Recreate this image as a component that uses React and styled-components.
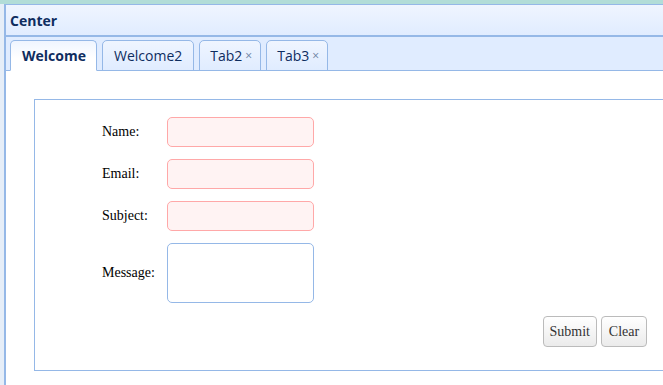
import styled, { createGlobalStyle } from 'styled-components';

const GlobalStyle = createGlobalStyle`
  html, body {
    margin: 0;
    padding: 0;
    overflow: hidden;
    background: #e6eef8;
  }
  body {
    font-family: "Liberation Serif", serif;
  }
`;

const tabs = [
  { label: 'Welcome', selected: true },
  { label: 'Welcome2' },
  { label: 'Tab2', closable: true },
  { label: 'Tab3', closable: true },
];

const fields = [
  { label: 'Name:', required: true },
  { label: 'Email:', required: true },
  { label: 'Subject:', required: true },
  { label: 'Message:', multiline: true },
];

const App = () => (
  <>
    <GlobalStyle />
    <TopStrip />
    <Panel>
      <PanelHeader>Center</PanelHeader>
      <TabBar>
        {tabs.map((tab) => (
          <Tab key={tab.label} $selected={tab.selected} $closable={tab.closable}>
            {tab.label}
            {tab.closable && <Close>×</Close>}
          </Tab>
        ))}
      </TabBar>
      <Content>
        <FormBox>
          <FormGrid>
            {fields.map((field) => (
              <Row key={field.label}>
                <Label>{field.label}</Label>
                {field.multiline ? <TextArea /> : <Input $required={field.required} />}
              </Row>
            ))}
          </FormGrid>
          <Actions>
            <Button>Submit</Button>
            <Button>Clear</Button>
          </Actions>
        </FormBox>
      </Content>
    </Panel>
  </>
);

const TopStrip = styled.div`
  height: 4px;
  background: #b2ddd8;
`;

const Panel = styled.div`
  margin-left: 4px;
  width: 720px;
  border-top: 1px solid #95b8e7;
  border-left: 2px solid #95b8e7;
`;

const PanelHeader = styled.div`
  height: 32px;
  box-sizing: border-box;
  padding: 0 0 0 4px;
  display: flex;
  align-items: center;
  background: linear-gradient(to bottom, #eff5ff 0%, #e0ecff 100%);
  border-bottom: 2px solid #95b8e7;
  font-family: "Open Sans", "DejaVu Sans", sans-serif;
  font-weight: bold;
  font-size: 14px;
  color: #0e2d5f;
`;

const TabBar = styled.div`
  height: 34px;
  box-sizing: border-box;
  padding: 3px 0 0 4px;
  display: flex;
  align-items: flex-end;
  gap: 5px;
  background: #e0ecff;
  border-bottom: 1px solid #95b8e7;
`;

const Tab = styled.div`
  height: 31px;
  box-sizing: border-box;
  margin-bottom: -1px;
  padding: 0 ${(p) => (p.$closable ? '8px' : p.$selected ? '10px' : '11px')} 0
    ${(p) => (p.$closable ? '10px' : '11px')};
  display: flex;
  align-items: center;
  gap: 3px;
  border: 1px solid #95b8e7;
  border-bottom: ${(p) => (p.$selected ? '1px solid #fff' : '1px solid #95b8e7')};
  border-radius: 5px 5px 0 0;
  background: ${(p) =>
    p.$selected
      ? 'linear-gradient(to bottom, #eff5ff 0%, #ffffff 60%)'
      : 'linear-gradient(to bottom, #eff5ff 0%, #e0ecff 100%)'};
  font-family: "Open Sans", "DejaVu Sans", sans-serif;
  font-size: 14px;
  font-weight: ${(p) => (p.$selected ? 'bold' : 'normal')};
  color: #0e2d5f;
`;

const Close = styled.span`
  font-size: 12px;
  color: #6c7f9f;
  margin-top: -1px;
`;

const Content = styled.div`
  background: #fff;
  padding: 28px 0 0 28px;
  height: 320px;
`;

const FormBox = styled.div`
  width: 660px;
  box-sizing: border-box;
  height: 272px;
  border: 1px solid #95b8e7;
  padding: 17px 46px 0 67px;
  display: flex;
  flex-direction: column;
`;

const FormGrid = styled.div`
  display: flex;
  flex-direction: column;
  gap: 12px;
`;

const Row = styled.div`
  display: flex;
  align-items: center;
`;

const Label = styled.label`
  width: 65px;
  font-size: 14px;
  color: #000;
`;

const Input = styled.div`
  width: 147px;
  height: 30px;
  box-sizing: border-box;
  border: 1px solid ${(p) => (p.$required ? '#ffa8a8' : '#95b8e7')};
  background: ${(p) => (p.$required ? '#fff3f3' : '#fff')};
  border-radius: 5px;
`;

const TextArea = styled.div`
  width: 147px;
  height: 60px;
  box-sizing: border-box;
  border: 1px solid #95b8e7;
  border-radius: 5px;
  background: #fff;
`;

const Actions = styled.div`
  margin-top: 13px;
  display: flex;
  justify-content: flex-end;
  gap: 4px;
`;

const Button = styled.button`
  height: 31px;
  min-width: 46px;
  padding: 0 6px;
  border: 1px solid #bbb;
  border-radius: 4px;
  background: linear-gradient(to bottom, #ffffff 0%, #ebebeb 100%);
  font-family: "Liberation Serif", serif;
  font-size: 14px;
  color: #333;
`;

export default App;
